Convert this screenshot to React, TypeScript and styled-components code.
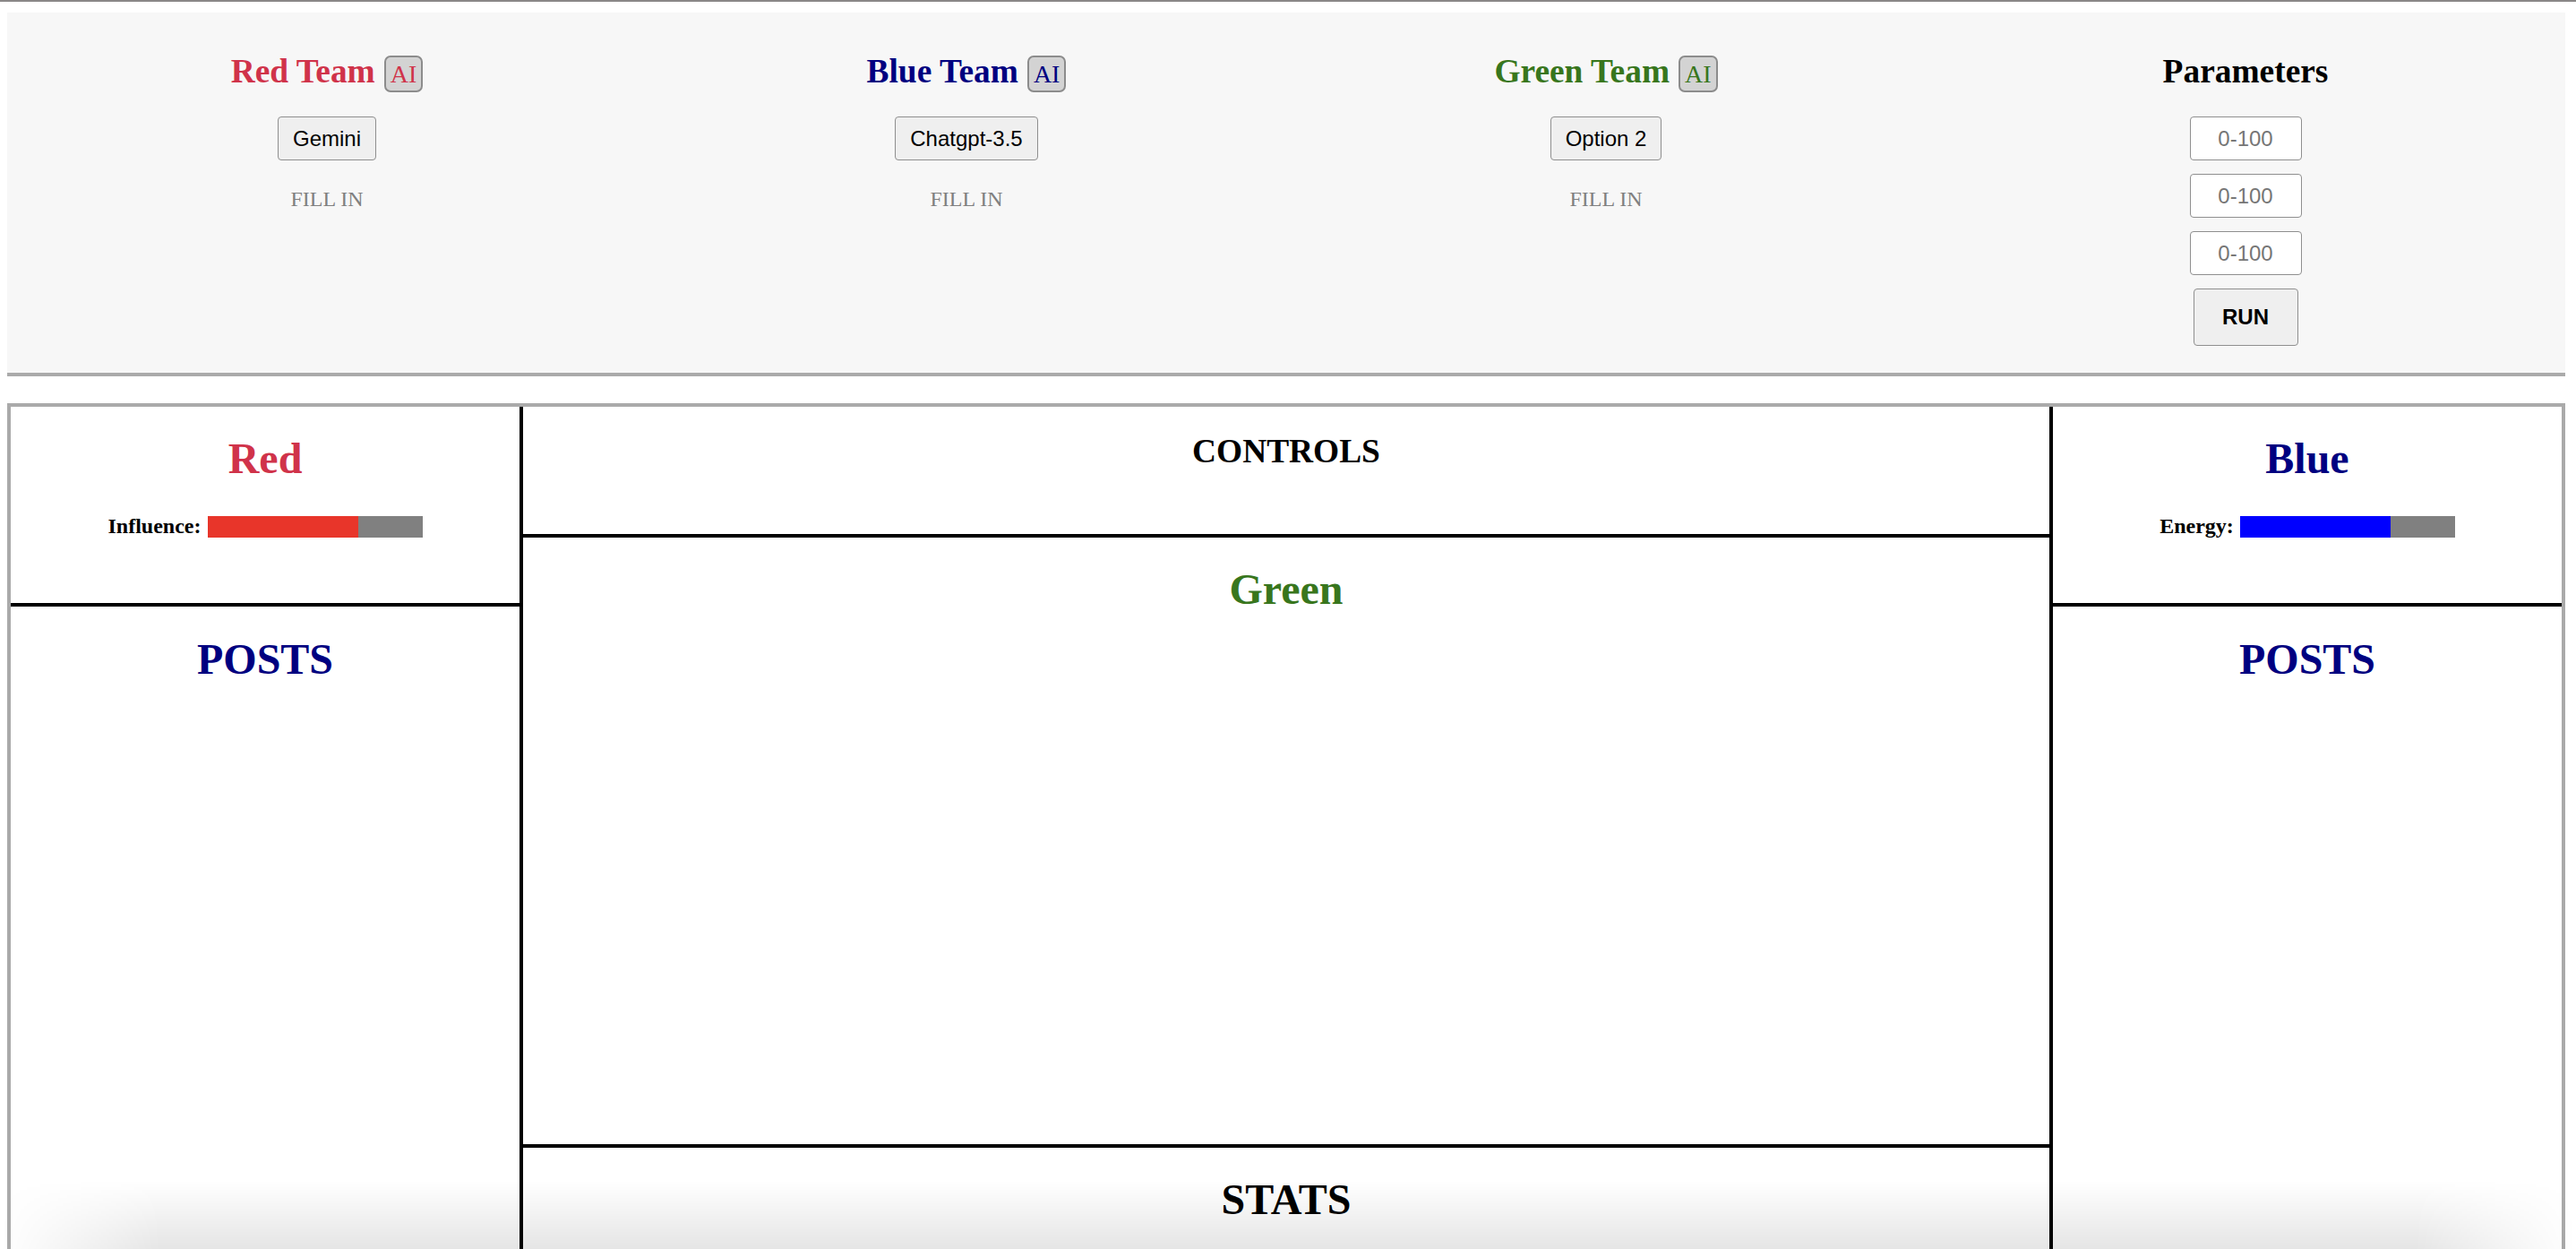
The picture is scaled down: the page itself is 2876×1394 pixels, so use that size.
import React, { useState } from "react";
import styled, { createGlobalStyle } from "styled-components";

const GlobalStyle = createGlobalStyle`
  * {
    box-sizing: border-box;
  }

  body {
    margin: 0;
    background: #ffffff;
    font-family: "Liberation Serif", "Times New Roman", serif;
  }
`;

const TopRule = styled.div`
  height: 2px;
  background: #8a8787;
`;

const Page = styled.div`
  padding: 12px 12px 0 8px;
`;

const SetupPanel = styled.section`
  display: flex;
  background: #f7f7f7;
  border-bottom: 4px solid #aaaaaa;
  padding: 44px 0 30px;
`;

const SetupColumn = styled.div`
  flex: 1;
  display: flex;
  flex-direction: column;
  align-items: center;
`;

const TitleRow = styled.div`
  display: flex;
  align-items: baseline;
  gap: 10px;
  min-height: 44px;
`;

const TeamTitle = styled.h3<{ $color: string }>`
  margin: 0;
  font-size: 37.4px;
  font-weight: bold;
  color: ${(p) => p.$color};
`;

const AiBadge = styled.span<{ $color: string }>`
  display: inline-block;
  font-size: 28px;
  line-height: 31px;
  padding: 3px 5px;
  color: ${(p) => p.$color};
  background: #d3d3d3;
  border: 2px solid #8c8c8c;
  border-radius: 7px;
`;

const ModelButton = styled.button`
  margin-top: 27px;
  height: 49px;
  padding: 0 16px;
  font-family: "Liberation Sans", Arial, sans-serif;
  font-size: 24px;
  color: #000000;
  background: #efefef;
  border: 1px solid #8f8f8f;
  border-radius: 4px;
`;

const FillIn = styled.p`
  margin: 30px 0 0;
  font-size: 24px;
  color: #808080;
`;

const ParamInput = styled.input`
  width: 125px;
  height: 49px;
  margin-top: 15px;
  text-align: center;
  font-family: "Liberation Sans", Arial, sans-serif;
  font-size: 24px;
  background: #ffffff;
  border: 1px solid #8f8f8f;
  border-radius: 4px;

  &:first-of-type {
    margin-top: 28px;
  }

  &::placeholder {
    color: #767676;
  }
`;

const RunButton = styled.button`
  margin-top: 15px;
  width: 117px;
  height: 64px;
  font-family: "Liberation Sans", Arial, sans-serif;
  font-size: 24px;
  font-weight: bold;
  color: #000000;
  background: #efefef;
  border: 1px solid #8f8f8f;
  border-radius: 4px;
`;

const Board = styled.main`
  display: flex;
  margin-top: 30px;
  border: 4px solid #aaaaaa;
  border-bottom: none;
`;

const SideColumn = styled.div`
  width: 568px;
  display: flex;
  flex-direction: column;
`;

const CenterColumn = styled.div`
  flex: 1;
  display: flex;
  flex-direction: column;
  border-left: 4px solid #000000;
  border-right: 4px solid #000000;
`;

const Cell = styled.div<{ $height: number; $top: number; $divider?: boolean }>`
  height: ${(p) => p.$height}px;
  flex: none;
  padding-top: ${(p) => p.$top}px;
  border-bottom: ${(p) => (p.$divider ? "4px solid #000000" : "none")};
  display: flex;
  flex-direction: column;
  align-items: center;
`;

const Heading = styled.h2<{ $color: string }>`
  margin: 0;
  font-size: 48px;
  font-weight: bold;
  color: ${(p) => p.$color};
`;

const SubHeading = styled.h3`
  margin: 0;
  font-size: 37.4px;
  font-weight: bold;
  color: #000000;
`;

const MeterRow = styled.div`
  display: flex;
  align-items: center;
  gap: 7px;
  margin-top: 35px;
`;

const MeterLabel = styled.span`
  font-size: 24px;
  font-weight: bold;
`;

const MeterTrack = styled.div`
  width: 240px;
  height: 24px;
  background: #808080;
`;

const MeterFill = styled.div<{ $color: string }>`
  height: 100%;
  background: ${(p) => p.$color};
`;

const BottomShade = styled.div`
  position: fixed;
  left: 0;
  right: 0;
  bottom: 0;
  height: 76px;
  pointer-events: none;
  background: linear-gradient(to bottom, rgba(0, 0, 0, 0), rgba(0, 0, 0, 0.1));
  -webkit-mask-image: linear-gradient(to right, transparent, #000 180px, #000 calc(100% - 180px), transparent);
  mask-image: linear-gradient(to right, transparent, #000 180px, #000 calc(100% - 180px), transparent);
`;

const teams = [
  { name: "Red Team", color: "#d0334a", model: "Gemini" },
  { name: "Blue Team", color: "#000080", model: "Chatgpt-3.5" },
  { name: "Green Team", color: "#38761d", model: "Option 2" },
];

const Meter: React.FC<{ label: string; value: number; color: string }> = ({ label, value, color }) => (
  <MeterRow>
    <MeterLabel>{label}</MeterLabel>
    <MeterTrack>
      <MeterFill $color={color} style={{ width: `${value}%` }} />
    </MeterTrack>
  </MeterRow>
);

const App: React.FC = () => {
  const [params, setParams] = useState<string[]>(["", "", ""]);

  return (
    <>
      <GlobalStyle />
      <TopRule />
      <Page>
        <SetupPanel>
          {teams.map((team) => (
            <SetupColumn key={team.name}>
              <TitleRow>
                <TeamTitle $color={team.color}>{team.name}</TeamTitle>
                <AiBadge $color={team.color}>AI</AiBadge>
              </TitleRow>
              <ModelButton>{team.model}</ModelButton>
              <FillIn>FILL IN</FillIn>
            </SetupColumn>
          ))}
          <SetupColumn>
            <TitleRow>
              <TeamTitle $color="#000000">Parameters</TeamTitle>
            </TitleRow>
            {params.map((value, i) => (
              <ParamInput
                key={i}
                type="text"
                placeholder="0-100"
                value={value}
                onChange={(e) => setParams(params.map((p, j) => (j === i ? e.target.value : p)))}
              />
            ))}
            <RunButton>RUN</RunButton>
          </SetupColumn>
        </SetupPanel>

        <Board>
          <SideColumn>
            <Cell $height={223} $top={30} $divider>
              <Heading $color="#d0334a">Red</Heading>
              <Meter label="Influence:" value={70} color="#e8352a" />
            </Cell>
            <Cell $height={900} $top={31}>
              <Heading $color="#000080">POSTS</Heading>
            </Cell>
          </SideColumn>

          <CenterColumn>
            <Cell $height={146} $top={28} $divider>
              <SubHeading>CONTROLS</SubHeading>
            </Cell>
            <Cell $height={681} $top={30} $divider>
              <Heading $color="#38761d">Green</Heading>
            </Cell>
            <Cell $height={300} $top={30}>
              <Heading $color="#000000">STATS</Heading>
            </Cell>
          </CenterColumn>

          <SideColumn>
            <Cell $height={223} $top={30} $divider>
              <Heading $color="#000080">Blue</Heading>
              <Meter label="Energy:" value={70} color="#0000ff" />
            </Cell>
            <Cell $height={900} $top={31}>
              <Heading $color="#000080">POSTS</Heading>
            </Cell>
          </SideColumn>
        </Board>
      </Page>
      <BottomShade />
    </>
  );
};

export default App;
